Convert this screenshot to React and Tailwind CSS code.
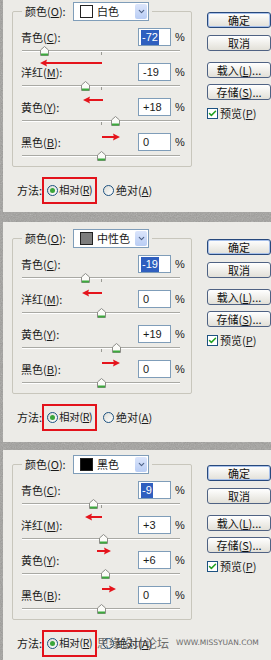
import React from 'react';
import { ChevronDown, Check } from 'lucide-react';

// three crops of the same Selective Color dialog, stacked
const PANELS = [
  {
    h: 'h-[212px]',
    pt: 'pt-0',
    color: '白色',
    swatch: 'bg-white',
    values: [-72, -19, 18, 0],
    arrows: [
      { x: 40, w: 62, y: 63, dir: 'l' },
      { x: 83, w: 20, y: 100, dir: 'l' },
      { x: 102, w: 18, y: 137, dir: 'r' },
    ],
  },
  {
    h: 'h-[220px]',
    pt: 'pt-[5px]',
    color: '中性色',
    swatch: 'bg-[#7d7d7d]',
    values: [-19, 0, 19, 0],
    arrows: [
      { x: 82, w: 20, y: 66, dir: 'l' },
      { x: 102, w: 18, y: 136, dir: 'r' },
    ],
  },
  {
    h: 'h-[210px]',
    pt: 'pt-[3px]',
    color: '黑色',
    swatch: 'bg-black',
    values: [-9, 3, 6, 0],
    arrows: [
      { x: 85, w: 17, y: 64, dir: 'l' },
      { x: 97, w: 14, y: 98, dir: 'r' },
      { x: 102, w: 14, y: 136, dir: 'r' },
    ],
    watermark: true,
  },
];

const ROWS = [
  { name: '青色', key: 'C' },
  { name: '洋红', key: 'M' },
  { name: '黄色', key: 'Y' },
  { name: '黑色', key: 'B' },
];

const fmt = (v) => (v > 0 ? `+${v}` : `${v}`);

function Arrow({ x, w, y, dir }) {
  return (
    <svg
      className="absolute"
      style={{ left: x - 3, top: y - 4 }}
      width={w}
      height={8}
      viewBox={`0 0 ${w} 8`}
    >
      {dir === 'l' ? (
        <>
          <line x1={5} y1={4} x2={w} y2={4} stroke="#e5141c" strokeWidth="2" />
          <path d="M0 4 L7 0.5 L6 4 L7 7.5 Z" fill="#e5141c" />
        </>
      ) : (
        <>
          <line x1={0} y1={4} x2={w - 5} y2={4} stroke="#e5141c" strokeWidth="2" />
          <path d={`M${w} 4 L${w - 7} 0.5 L${w - 6} 4 L${w - 7} 7.5 Z`} fill="#e5141c" />
        </>
      )}
    </svg>
  );
}

function Slider({ value }) {
  // track 158px wide, centre tick at 79px
  const left = 79 + (value / 100) * 79 - 4.5;
  return (
    <div className="relative ml-[9px] w-[158px] h-[17px] shrink-0">
      <div className="absolute top-[4px] inset-x-0 h-[2px] border-t border-[#a9a9a4] bg-white" />
      <div className="absolute top-[6px] left-[79px] w-px h-[3px] bg-[#9a9a94]" />
      <svg className="absolute top-0" style={{ left }} width="9" height="10" viewBox="0 0 9 10">
        <path d="M0.5 4 L4.5 0.5 L8.5 4 V9.5 H0.5 Z" fill="#fbfbf8" stroke="#8d8d88" />
        <rect x="1" y="7.5" width="7" height="2" fill="#3daa3d" />
      </svg>
    </div>
  );
}

function Btn({ children, primary, className }) {
  return (
    <div
      className={`h-[16px] w-[64px] shrink-0 flex items-center justify-center rounded-[3px] border bg-gradient-to-b from-white to-[#e2e0d8] text-[11px] leading-none text-[#111] ${
        primary ? 'border-[#28497c] shadow-[inset_0_0_0_1px_#a7c0ea]' : 'border-[#4f6283]'
      } ${className}`}
    >
      {children}
    </div>
  );
}

function Dialog({ color, swatch, values, arrows, watermark }) {
  return (
    <div className="relative flex pl-[9px] whitespace-nowrap text-[#1a1a1a] font-['Noto_Sans_CJK_SC','Noto_Sans',sans-serif]">
      <div className="w-[180px] shrink-0 flex flex-col">
        <div className="mt-[11px] h-[156px] border border-[#c8c6bc] rounded-[2px] flex flex-col">
          <div className="-mt-[10px] ml-[9px] w-fit h-[19px] px-[3px] bg-[#ecebe7] flex items-center">
            <span className="w-[44px] text-[11px] leading-none">
              颜色(<span className="underline">O</span>):
            </span>
            <div className="ml-[4px] w-[76px] h-[19px] border border-[#7f9db9] bg-white flex items-center">
              <div className={`ml-[6px] w-[13px] h-[13px] border border-[#222] ${swatch}`} />
              <span className="ml-[4px] text-[11px] leading-none flex-1">{color}</span>
              <div className="mr-px w-[12px] h-[15px] rounded-[2px] bg-gradient-to-b from-[#dbe5fb] to-[#b9cdf4] flex items-center justify-center">
                <ChevronDown size={9} strokeWidth={3} color="#4d6185" />
              </div>
            </div>
          </div>
          <div className="h-[7px] shrink-0" />
          {ROWS.map((r, i) => (
            <div key={r.key} className="flex flex-col shrink-0">
              <div className="flex items-center h-[18px] pl-[8px]">
                <span className="flex-1 text-[11px] leading-none">
                  {r.name}(<span className="underline">{r.key}</span>):
                </span>
                <div
                  className={`w-[33px] h-[18px] border border-[#7f9db9] bg-white flex items-center text-[11px] leading-none font-['Liberation_Sans',sans-serif] ${
                    i === 0 ? 'pl-[2px]' : 'pl-[4px]'
                  }`}
                >
                  {i === 0 ? (
                    <span className="bg-[#2f5fbf] text-white px-px py-[2px]">{fmt(values[i])}</span>
                  ) : (
                    fmt(values[i])
                  )}
                </div>
                <span className="ml-[4px] w-[16px] text-[11px] leading-none font-['Liberation_Sans',sans-serif]">%</span>
              </div>
              <Slider value={values[i]} />
            </div>
          ))}
        </div>
        <div className="mt-[10px] flex items-center pl-[5px]">
          <span className="w-[25px] shrink-0 text-[11px] leading-none">方法:</span>
          <div className="w-[55px] h-[27px] shrink-0 border-2 border-[#e3121b] flex items-center pl-[3px]">
            <div className="w-[11px] h-[11px] shrink-0 rounded-full border border-[#1d5281] bg-gradient-to-br from-[#dcdcd6] to-white flex items-center justify-center">
              <div className="w-[5px] h-[5px] rounded-full bg-[#3aa63a]" />
            </div>
            <span className="ml-[1px] text-[10.5px] leading-none tracking-[-0.3px]">
              相对(<span className="underline">R</span>)
            </span>
          </div>
          <div className="ml-[6px] w-[11px] h-[11px] shrink-0 rounded-full border border-[#1d5281] bg-gradient-to-br from-[#dcdcd6] to-white" />
          <span className="ml-[2px] text-[11px] leading-none">
            绝对(<span className="underline">A</span>)
          </span>
        </div>
      </div>

      <div className="ml-[15px] flex flex-col">
        <Btn primary className="mt-[12px]">确定</Btn>
        <Btn className="mt-[7px]">取消</Btn>
        <Btn className="mt-[11px]">
          载入(<span className="underline">L</span>)...
        </Btn>
        <Btn className="mt-[6px]">
          存储(<span className="underline">S</span>)...
        </Btn>
        <div className="mt-[8px] flex items-center">
          <div className="w-[11px] h-[11px] border border-[#1d5281] bg-white flex items-center justify-center">
            <Check size={9} strokeWidth={4} color="#21a121" />
          </div>
          <span className="ml-[2px] text-[11px] leading-none">
            预览(<span className="underline">P</span>)
          </span>
        </div>
      </div>

      {arrows.map((a, i) => (
        <Arrow key={i} {...a} />
      ))}

      {watermark && (
        <div className="absolute top-[184px] left-[94px] flex items-center">
          <span className="text-[12px] leading-none text-[#4a4a4a]/80">思缘设计论坛</span>
          <span className="ml-[7px] text-[7.5px] leading-none text-[#6a6a6a] font-['DejaVu_Sans',sans-serif]">
            WWW.MISSYUAN.COM
          </span>
        </div>
      )}
    </div>
  );
}

export default function App() {
  return (
    <div className="relative w-[271px] h-[660px] overflow-hidden bg-[#9d9d9b]">
      {/* grainy backdrop between the crops */}
      <svg className="absolute inset-0" width="271" height="660">
        <filter id="grain">
          <feTurbulence type="fractalNoise" baseFrequency="0.85" numOctaves="2" seed="4" />
          <feColorMatrix type="saturate" values="0" />
        </filter>
        <rect width="271" height="660" fill="#a09f9c" />
        <rect width="271" height="660" filter="url(#grain)" opacity="0.45" />
      </svg>
      <div className="relative flex flex-col">
        {PANELS.map((p, i) => (
          <React.Fragment key={i}>
            {i === 1 && <div className="h-[10px]" />}
            {i === 2 && <div className="h-[8px]" />}
            <div className={`ml-[3px] overflow-hidden bg-[#ecebe7] ${p.h} ${p.pt}`}>
              <Dialog {...p} />
            </div>
          </React.Fragment>
        ))}
      </div>
    </div>
  );
}
